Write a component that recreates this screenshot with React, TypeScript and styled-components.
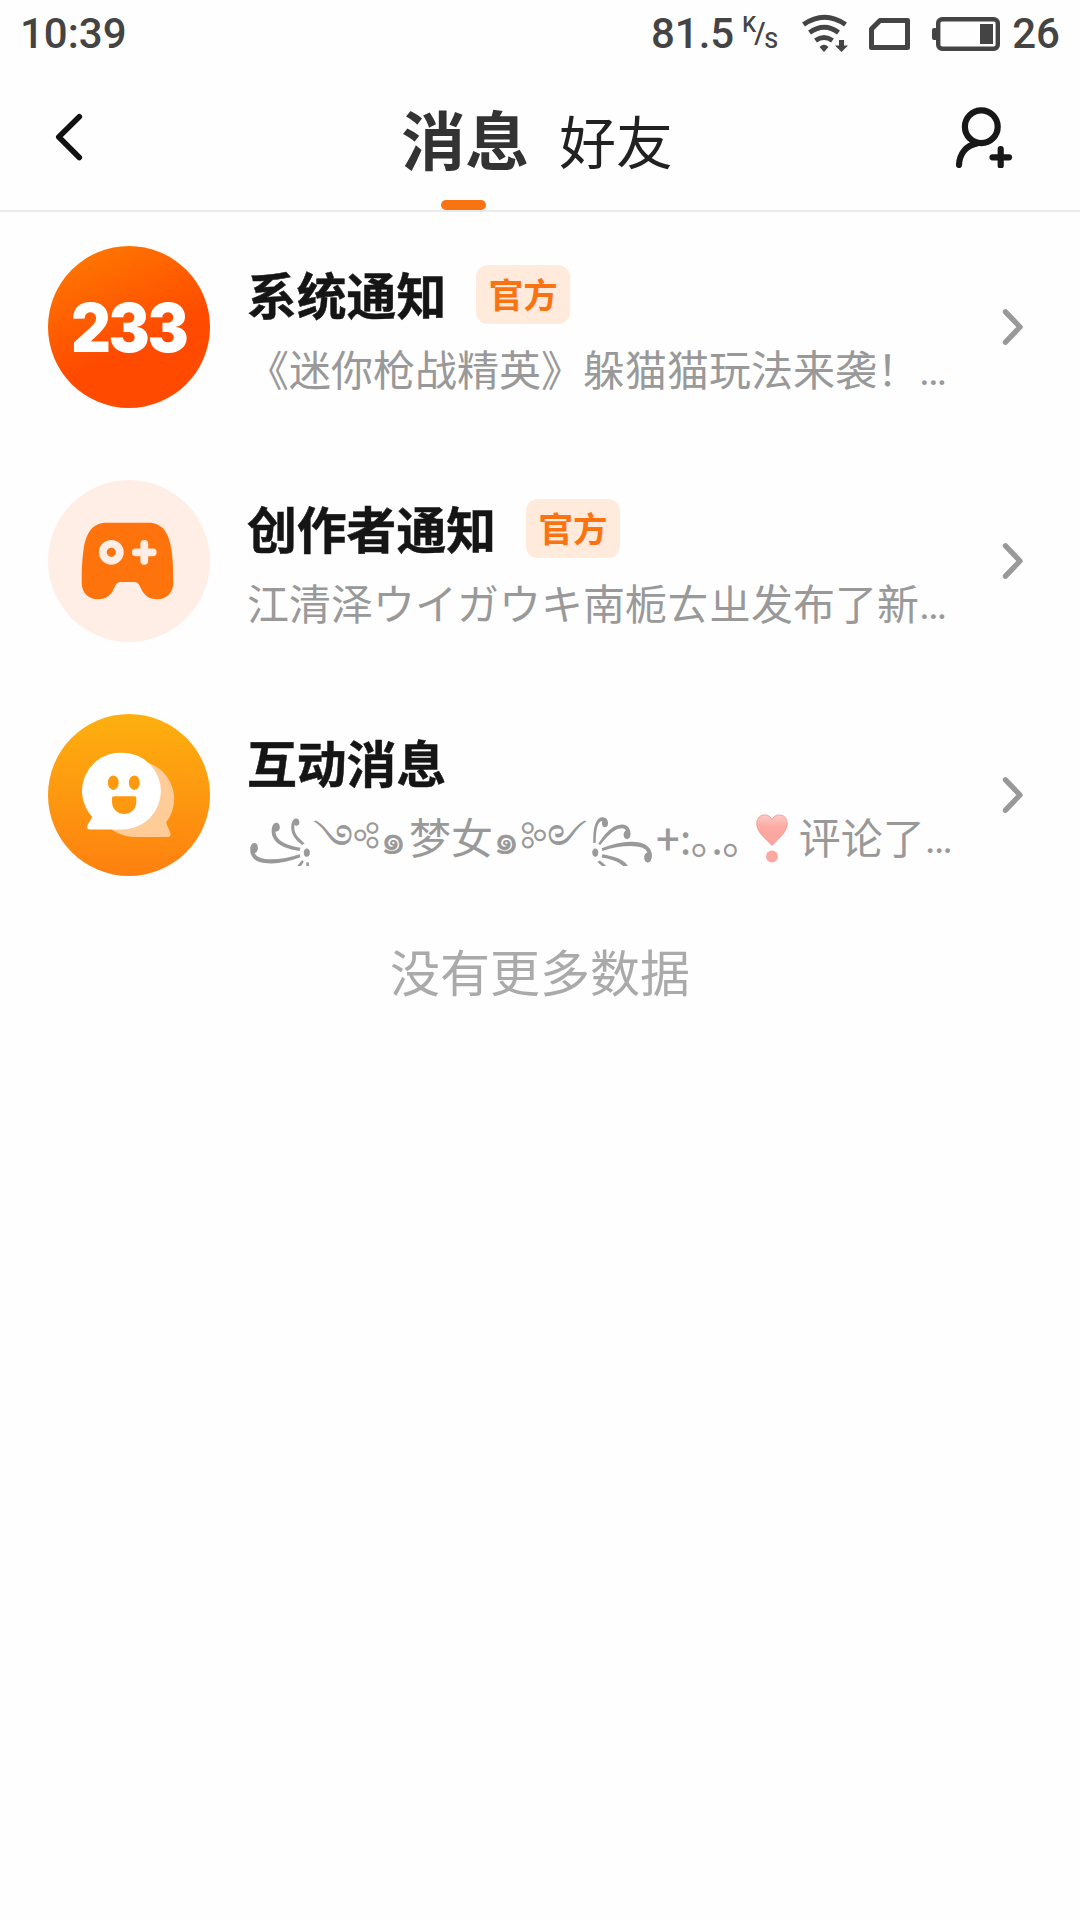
import React from 'react';
import styled, { createGlobalStyle } from 'styled-components';

const GlobalStyle = createGlobalStyle`
  * { box-sizing: border-box; }
  html, body { margin: 0; background: #fefefe; }
  body { font-family: "Noto Sans CJK SC", sans-serif; }
  svg { display: block; flex: none; }
`;

const Screen = styled.main`
  display: flex;
  flex-direction: column;
  width: 1080px;
  height: 1920px;
  overflow: hidden;
  background: #fefefe;
`;

const StatusBar = styled.div`
  display: flex;
  align-items: center;
  height: 66px;
  padding: 1px 20px 0 20px;
  font: 500 42px/65px Roboto, sans-serif;
  color: #444;
`;

const Clock = styled.span`
  margin-right: auto;
`;

const Speed = styled.div`
  display: flex;
  align-items: center;
  gap: 8px;
  margin-right: 22px;
`;

const SpeedUnit = styled.span`
  display: flex;
  align-items: flex-start;
  width: 36px;
  height: 33px;
`;

const UnitPart = styled.span<{ $size: number; $drop: number; $pull?: number }>`
  margin: ${(p) => p.$drop}px 0 0 ${(p) => p.$pull ?? 0}px;
  font-size: ${(p) => p.$size}px;
  line-height: 16px;
`;

const Indicators = styled.div`
  display: flex;
  align-items: center;
  gap: 21px;
  margin-right: 11px;
`;

const Header = styled.header`
  display: grid;
  grid-template-columns: 1fr auto 1fr;
  height: 146px;
  padding: 0 64px 0 52px;
  border-bottom: 2px solid #ebebeb;
`;

const HeaderSlot = styled.div<{ $end?: boolean }>`
  display: flex;
  justify-content: ${(p) => (p.$end ? 'flex-end' : 'flex-start')};
  padding-top: 36px;
`;

const Tabs = styled.nav`
  display: flex;
  gap: 30px;
  margin-left: 6px;
`;

const Tab = styled.div<{ $active?: boolean }>`
  display: flex;
  flex-direction: column;
  align-items: center;
  justify-content: space-between;
  padding-top: ${(p) => (p.$active ? 29 : 31)}px;
  font-size: ${(p) => (p.$active ? 64 : 56.8)}px;
  font-weight: ${(p) => (p.$active ? 700 : 400)};
  line-height: 84px;
  color: ${(p) => (p.$active ? '#333' : '#212121')};
`;

const Indicator = styled.span`
  width: 45px;
  height: 10px;
  margin-right: 3px;
  border-radius: 5px;
  background: #fa7312;
`;

const List = styled.section`
  display: flex;
  flex-direction: column;
  gap: 72px;
  padding: 34px 54px 0 48px;
`;

const Row = styled.article`
  display: flex;
  align-items: center;
  height: 162px;
`;

const Avatar = styled.div<{ $bg: string }>`
  display: flex;
  align-items: center;
  justify-content: center;
  flex: none;
  width: 162px;
  height: 162px;
  border-radius: 50%;
  background: ${(p) => p.$bg};
`;

const Body = styled.div`
  flex: 1;
  align-self: flex-start;
  min-width: 0;
  padding: 19px 0 0 37px;
`;

const TitleLine = styled.div`
  display: flex;
  align-items: center;
  gap: 30px;
  height: 59px;
`;

const Title = styled.h2`
  margin: 0;
  padding-bottom: 3px;
  font-size: 49.8px;
  font-weight: 700;
  line-height: 56px;
  color: #151515;
  -webkit-text-stroke: 0.5px #151515;
`;

const Badge = styled.span`
  width: 94px;
  height: 59px;
  border-radius: 12px;
  background: #ffeadb;
  color: #fa7312;
  font-size: 34.5px;
  font-weight: 700;
  line-height: 57px;
  text-align: center;
`;

const Preview = styled.p`
  display: flex;
  align-items: center;
  height: 60px;
  margin: 14px 0 0;
  overflow: hidden;
  font-size: 42px;
  line-height: 60px;
  white-space: nowrap;
  color: #999;
`;

const Flourish = styled.span`
  transform: translateY(7px) scaleY(1.35);
`;

const Curl = styled.span`
  margin-right: 2px;
`;

const Plus = styled.span`
  margin: 8px 0 0 1px;
  font-family: Roboto, sans-serif;
`;

const Marks = styled.span`
  letter-spacing: -0.6px;
`;

const Dots = styled.span`
  padding-top: 5px;
  font-family: Roboto, sans-serif;
`;

const HeartMark = styled.svg`
  margin: 6px 11px 0 13px;
`;

const Footer = styled.footer`
  margin-top: 58px;
  font-size: 50px;
  line-height: 72px;
  text-align: center;
  color: #aaa;
`;

const LogoText = styled.span`
  padding: 1px 0 0;
  color: #fff;
  font: 900 67px/1 Inter, sans-serif;
  letter-spacing: -2.5px;
  transform: scaleX(0.92);
`;

const BackIcon = () => (
  <svg width="34" height="70" viewBox="0 0 34 70" fill="none" stroke="#111" strokeWidth="5.6" strokeLinecap="round" strokeLinejoin="round">
    <path d="M27.3 14.8L6.8 35L27.3 55.5" />
  </svg>
);

const AddFriendIcon = () => (
  <svg width="64" height="66" viewBox="952 102 64 66" fill="none" stroke="#181818" strokeWidth="6.2" strokeLinecap="round">
    <circle cx="981.3" cy="126.7" r="16.4" />
    <path d="M977 143.4C966 145.5 959.3 154 959 165M1000.7 149.2V165.5M992.5 157.3H1009" />
  </svg>
);

const WifiIcon = () => (
  <svg width="48" height="40" viewBox="800 13 48 40" fill="none" stroke="#444" strokeWidth="5">
    <path d="M803.5 23.5Q824.5 9 845.5 23.5M809.5 31.5Q824.5 21 838.5 31.5M815.5 39.5Q824 33.5 832.5 39.5" />
    <path d="M819.5 46Q824 41.5 828.5 46L824 51ZM839 39H844V44.5H848L841.5 51L835 44.5H839Z" fill="#444" stroke="none" />
  </svg>
);

const SimIcon = () => (
  <svg width="42" height="34" viewBox="870 16 42 34" fill="none" stroke="#444" strokeWidth="5" strokeLinejoin="round">
    <path d="M881 19.5H908.5V46.5H872.5V28Z" />
  </svg>
);

const BatteryIcon = () => (
  <svg width="69" height="36" viewBox="932 15 69 36">
    <rect x="938.2" y="18.2" width="59.6" height="29.6" rx="4" fill="none" stroke="#444" strokeWidth="4.4" />
    <rect x="932" y="27" width="6" height="12" rx="2" fill="#444" />
    <rect x="980" y="23" width="13" height="20" fill="#444" />
  </svg>
);

const Chevron = () => (
  <svg width="24" height="40" viewBox="0 0 24 40" fill="none" stroke="#999" strokeWidth="5.4" strokeLinecap="round" strokeLinejoin="round">
    <path d="M3.5 4.8L18 20L3.5 35.2" />
  </svg>
);

const HeartExclamation = () => (
  <HeartMark width="32" height="50" viewBox="0 0 32 50" role="img" aria-label="❣">
    <defs>
      <linearGradient id="heart" x1="0" y1="0" x2="0" y2="1">
        <stop offset="0" stopColor="#fdc9c4" />
        <stop offset="0.4" stopColor="#fcaaa3" />
        <stop offset="1" stopColor="#f9a39b" />
      </linearGradient>
    </defs>
    <path d="M16 5.5C18.5 1 22 0.8 24.5 1C29 1.5 31.5 5.5 31.2 10.5C30.8 18.5 22 25 16 31.5C10 25 1.2 18.5 0.8 10.5C0.5 5.5 3 1.5 7.5 1C10 0.8 13.5 1 16 5.5Z" fill="url(#heart)" stroke="#f0928c" strokeWidth="0.8" />
    <circle cx="16" cy="42.5" r="6" fill="#fba9a1" />
  </HeartMark>
);

const GamepadIcon = () => (
  <svg width="162" height="162" viewBox="0 0 162 162">
    <path fill="#ff730d" d="M58.7 42.7H100.3C115 42.7 121 53 123.5 70C125 81 125.3 90 125.3 103C125.3 113 118 119.3 109 119.3C101 119.3 96 115 93.5 109.5C91 103.5 89.5 102 85 102H74C69.5 102 68 103.5 65.5 109.5C63 115 58 119.3 50 119.3C41 119.3 33.7 113 33.7 103C33.7 90 34 81 35.5 70C38 53 44 42.7 58.7 42.7Z" />
    <circle cx="63.3" cy="72.3" r="8.5" fill="none" stroke="#ffeee5" strokeWidth="7.8" />
    <path d="M96.3 63.8V80.8M87.8 72.3H104.8" stroke="#ffeee5" strokeWidth="7.8" strokeLinecap="round" />
  </svg>
);

const ChatFaceIcon = () => (
  <svg width="162" height="162" viewBox="0 0 162 162">
    <path fill="#ffcb96" d="M87.7 47A38 38 0 0 1 118 108.5L122 118Q124 123 119.5 123H85A38 38 0 0 1 87.7 47Z" />
    <path fill="#fff" d="M74.5 38.7A38.4 38.4 0 1 1 74.5 115.5H42Q37.5 115 39.8 110.5L44.3 103A38.3 38.3 0 0 1 74.5 38.7Z" />
    <g fill="#fe980f">
      <ellipse cx="65.3" cy="68.7" rx="5.4" ry="7.2" />
      <ellipse cx="86.3" cy="68.7" rx="5.4" ry="7.2" />
      <path d="M66 82.3H86.5Q88.3 82.3 88.3 84V88A12.15 12 0 0 1 64 88V84Q64 82.3 66 82.3Z" />
    </g>
  </svg>
);

export default function App() {
  return (
    <Screen>
      <GlobalStyle />
      <StatusBar>
        <Clock>10:39</Clock>
        <Speed>
          <span>81.5</span>
          <SpeedUnit>
            <UnitPart $size={22} $drop={0}>K</UnitPart>
            <UnitPart $size={29} $drop={8} $pull={-2}>/</UnitPart>
            <UnitPart $size={22} $drop={16} $pull={-1}>S</UnitPart>
          </SpeedUnit>
        </Speed>
        <Indicators>
          <WifiIcon />
          <SimIcon />
          <BatteryIcon />
        </Indicators>
        <span>26</span>
      </StatusBar>
      <Header>
        <HeaderSlot><BackIcon /></HeaderSlot>
        <Tabs>
          <Tab $active>消息<Indicator /></Tab>
          <Tab>好友</Tab>
        </Tabs>
        <HeaderSlot $end><AddFriendIcon /></HeaderSlot>
      </Header>
      <List>
        <Row>
          <Avatar $bg="linear-gradient(155deg, #ff7a00 5%, #ff4a00 60%)"><LogoText>233</LogoText></Avatar>
          <Body>
            <TitleLine><Title>系统通知</Title><Badge>官方</Badge></TitleLine>
            <Preview>《迷你枪战精英》躲猫猫玩法来袭！<Dots>…</Dots></Preview>
          </Body>
          <Chevron />
        </Row>
        <Row>
          <Avatar $bg="#ffeee5"><GamepadIcon /></Avatar>
          <Body>
            <TitleLine><Title>创作者通知</Title><Badge>官方</Badge></TitleLine>
            <Preview>江清泽ウイガウキ南栀ㄊㄓ发布了新<Dots>…</Dots></Preview>
          </Body>
          <Chevron />
        </Row>
        <Row>
          <Avatar $bg="linear-gradient(#fdb00f, #fe8010)"><ChatFaceIcon /></Avatar>
          <Body>
            <TitleLine><Title>互动消息</Title></TitleLine>
            <Preview>
              <Flourish>꧁</Flourish>
              <Curl>༺๑</Curl>
              <Curl>梦女๑༻</Curl>
              <Flourish>꧂</Flourish>
              <Plus>+</Plus>
              <Marks>:｡.｡</Marks>
              <HeartExclamation />
              评论了<Dots>…</Dots>
            </Preview>
          </Body>
          <Chevron />
        </Row>
      </List>
      <Footer>没有更多数据</Footer>
    </Screen>
  );
}
